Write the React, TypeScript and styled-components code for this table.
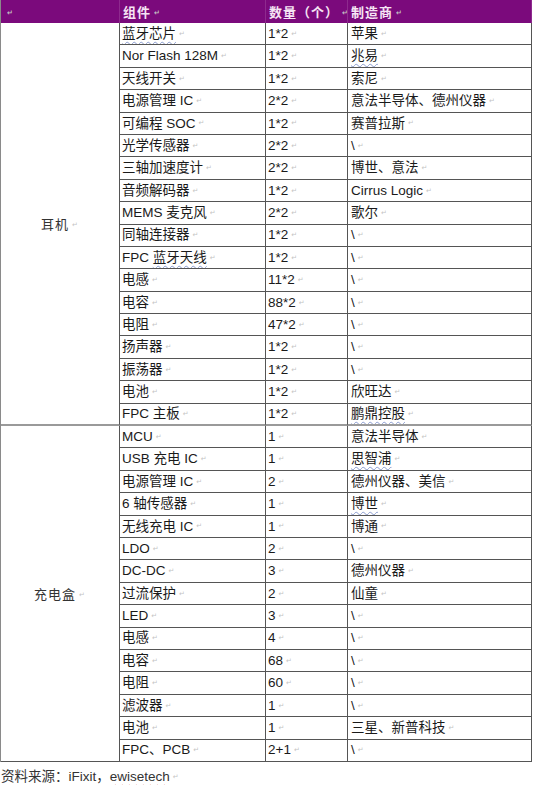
import React from 'react'
import styled, { createGlobalStyle } from 'styled-components'

type Row = { part: string; qty: string; maker: string; wavyPart?: string; wavyMaker?: boolean }

const earphone: Row[] = [
  { part: '蓝牙芯片', qty: '1*2', maker: '苹果', wavyPart: '蓝牙芯片' },
  { part: 'Nor Flash 128M', qty: '1*2', maker: '兆易', wavyMaker: true },
  { part: '天线开关', qty: '1*2', maker: '索尼' },
  { part: '电源管理 IC', qty: '2*2', maker: '意法半导体、德州仪器' },
  { part: '可编程 SOC', qty: '1*2', maker: '赛普拉斯' },
  { part: '光学传感器', qty: '2*2', maker: '\\' },
  { part: '三轴加速度计', qty: '2*2', maker: '博世、意法' },
  { part: '音频解码器', qty: '1*2', maker: 'Cirrus Logic' },
  { part: 'MEMS 麦克风', qty: '2*2', maker: '歌尔' },
  { part: '同轴连接器', qty: '1*2', maker: '\\' },
  { part: 'FPC 蓝牙天线', qty: '1*2', maker: '\\', wavyPart: '蓝牙天线' },
  { part: '电感', qty: '11*2', maker: '\\' },
  { part: '电容', qty: '88*2', maker: '\\' },
  { part: '电阻', qty: '47*2', maker: '\\' },
  { part: '扬声器', qty: '1*2', maker: '\\' },
  { part: '振荡器', qty: '1*2', maker: '\\' },
  { part: '电池', qty: '1*2', maker: '欣旺达' },
  { part: 'FPC 主板', qty: '1*2', maker: '鹏鼎控股', wavyMaker: true },
]

const chargingCase: Row[] = [
  { part: 'MCU', qty: '1', maker: '意法半导体' },
  { part: 'USB 充电 IC', qty: '1', maker: '思智浦', wavyMaker: true },
  { part: '电源管理 IC', qty: '2', maker: '德州仪器、美信' },
  { part: '6 轴传感器', qty: '1', maker: '博世', wavyMaker: true },
  { part: '无线充电 IC', qty: '1', maker: '博通' },
  { part: 'LDO', qty: '2', maker: '\\' },
  { part: 'DC-DC', qty: '3', maker: '德州仪器' },
  { part: '过流保护', qty: '2', maker: '仙童' },
  { part: 'LED', qty: '3', maker: '\\' },
  { part: '电感', qty: '4', maker: '\\' },
  { part: '电容', qty: '68', maker: '\\' },
  { part: '电阻', qty: '60', maker: '\\' },
  { part: '滤波器', qty: '1', maker: '\\' },
  { part: '电池', qty: '1', maker: '三星、新普科技' },
  { part: 'FPC、PCB', qty: '2+1', maker: '\\' },
]

const GlobalStyle = createGlobalStyle`
  html, body {
    margin: 0;
    padding: 0;
    background: #fff;
  }
  body {
    font-family: "Liberation Sans", "Noto Sans CJK SC", sans-serif;
    font-size: 13.5px;
    color: #1a1a1a;
  }
`

const Sheet = styled.div`
  width: 536px;
  height: 785px;
  overflow: hidden;
  background: #fff;
`

const Grid = styled.div`
  display: grid;
  width: 531px;
  grid-template-columns: 119px 146px 82px 184px;
  grid-template-rows: 23px repeat(33, 22.4px);
  border-left: 1px solid #8a8a8a;
  box-sizing: border-box;
`

const HeadCell = styled.div`
  display: flex;
  align-items: center;
  padding-left: 3px;
  background: #7b0a7c;
  color: #f6e4f4;
  font-family: "Noto Sans CJK SC", sans-serif;
  font-weight: 700;
  font-size: 13px;
  letter-spacing: 1px;
  border-right: 1px solid #8e2a8e;
  white-space: nowrap;
  &:last-child {
    border-right: 1px solid #5a055a;
  }
`

const Cell = styled.div<{ $strong?: boolean }>`
  display: flex;
  align-items: center;
  padding-left: 2px;
  box-sizing: border-box;
  border-right: 1px solid #555;
  border-bottom: ${(p) => (p.$strong ? '2px solid #9a9a9a' : '1px solid #555')};
  white-space: nowrap;
  overflow: hidden;
  line-height: 1;
`

const GroupCell = styled.div<{ $span: number; $strong?: boolean }>`
  grid-row: span ${(p) => p.$span};
  display: flex;
  align-items: center;
  justify-content: center;
  font-family: "Noto Sans CJK SC", sans-serif;
  font-size: 13px;
  color: #333;
  letter-spacing: 1px;
  border-right: 1px solid #555;
  border-bottom: ${(p) => (p.$strong ? '2px solid #9a9a9a' : '1px solid #555')};
`

const Text = styled.span`
  &::after {
    content: '↵';
    font-family: "DejaVu Sans", sans-serif;
    font-size: 7px;
    color: #c4c4c4;
    margin-left: 3px;
    vertical-align: middle;
  }
`

const Wavy = styled.span<{ $color?: string }>`
  text-decoration: underline wavy ${(p) => p.$color || '#8a9ccf'};
  text-decoration-thickness: 1px;
  text-underline-offset: 3px;
`

const Footer = styled.div`
  padding: 3px 0 0 1px;
  font-size: 13.5px;
  color: #333;
`

const renderPart = (row: Row) => {
  if (!row.wavyPart) return row.part
  const idx = row.part.indexOf(row.wavyPart)
  return (
    <>
      {row.part.slice(0, idx)}
      <Wavy>{row.wavyPart}</Wavy>
    </>
  )
}

const Group = ({ name, rows, strong }: { name: string; rows: Row[]; strong?: boolean }) => (
  <>
    {rows.map((row, i) => {
      const last = strong && i === rows.length - 1
      return (
        <React.Fragment key={i}>
          {i === 0 && (
            <GroupCell $span={rows.length} $strong={strong}>
              <Text>{name}</Text>
            </GroupCell>
          )}
          <Cell $strong={last}>
            <Text>{renderPart(row)}</Text>
          </Cell>
          <Cell $strong={last}>
            <Text>{row.qty}</Text>
          </Cell>
          <Cell $strong={last} style={{ paddingLeft: 3 }}>
            <Text>{row.wavyMaker ? <Wavy>{row.maker}</Wavy> : row.maker}</Text>
          </Cell>
        </React.Fragment>
      )
    })}
  </>
)

const App = (): JSX.Element => (
  <Sheet>
    <GlobalStyle />
    <Grid>
      <HeadCell>
        <Text />
      </HeadCell>
      <HeadCell>
        <Text>组件</Text>
      </HeadCell>
      <HeadCell>
        <Text>数量（个）</Text>
      </HeadCell>
      <HeadCell>
        <Text>制造商</Text>
      </HeadCell>
      <Group name="耳机" rows={earphone} strong />
      <Group name="充电盒" rows={chargingCase} />
    </Grid>
    <Footer>
      <Text>
        资料来源：iFixit，<Wavy $color="#d04040">ewisetech</Wavy>
      </Text>
    </Footer>
  </Sheet>
)

export default App
